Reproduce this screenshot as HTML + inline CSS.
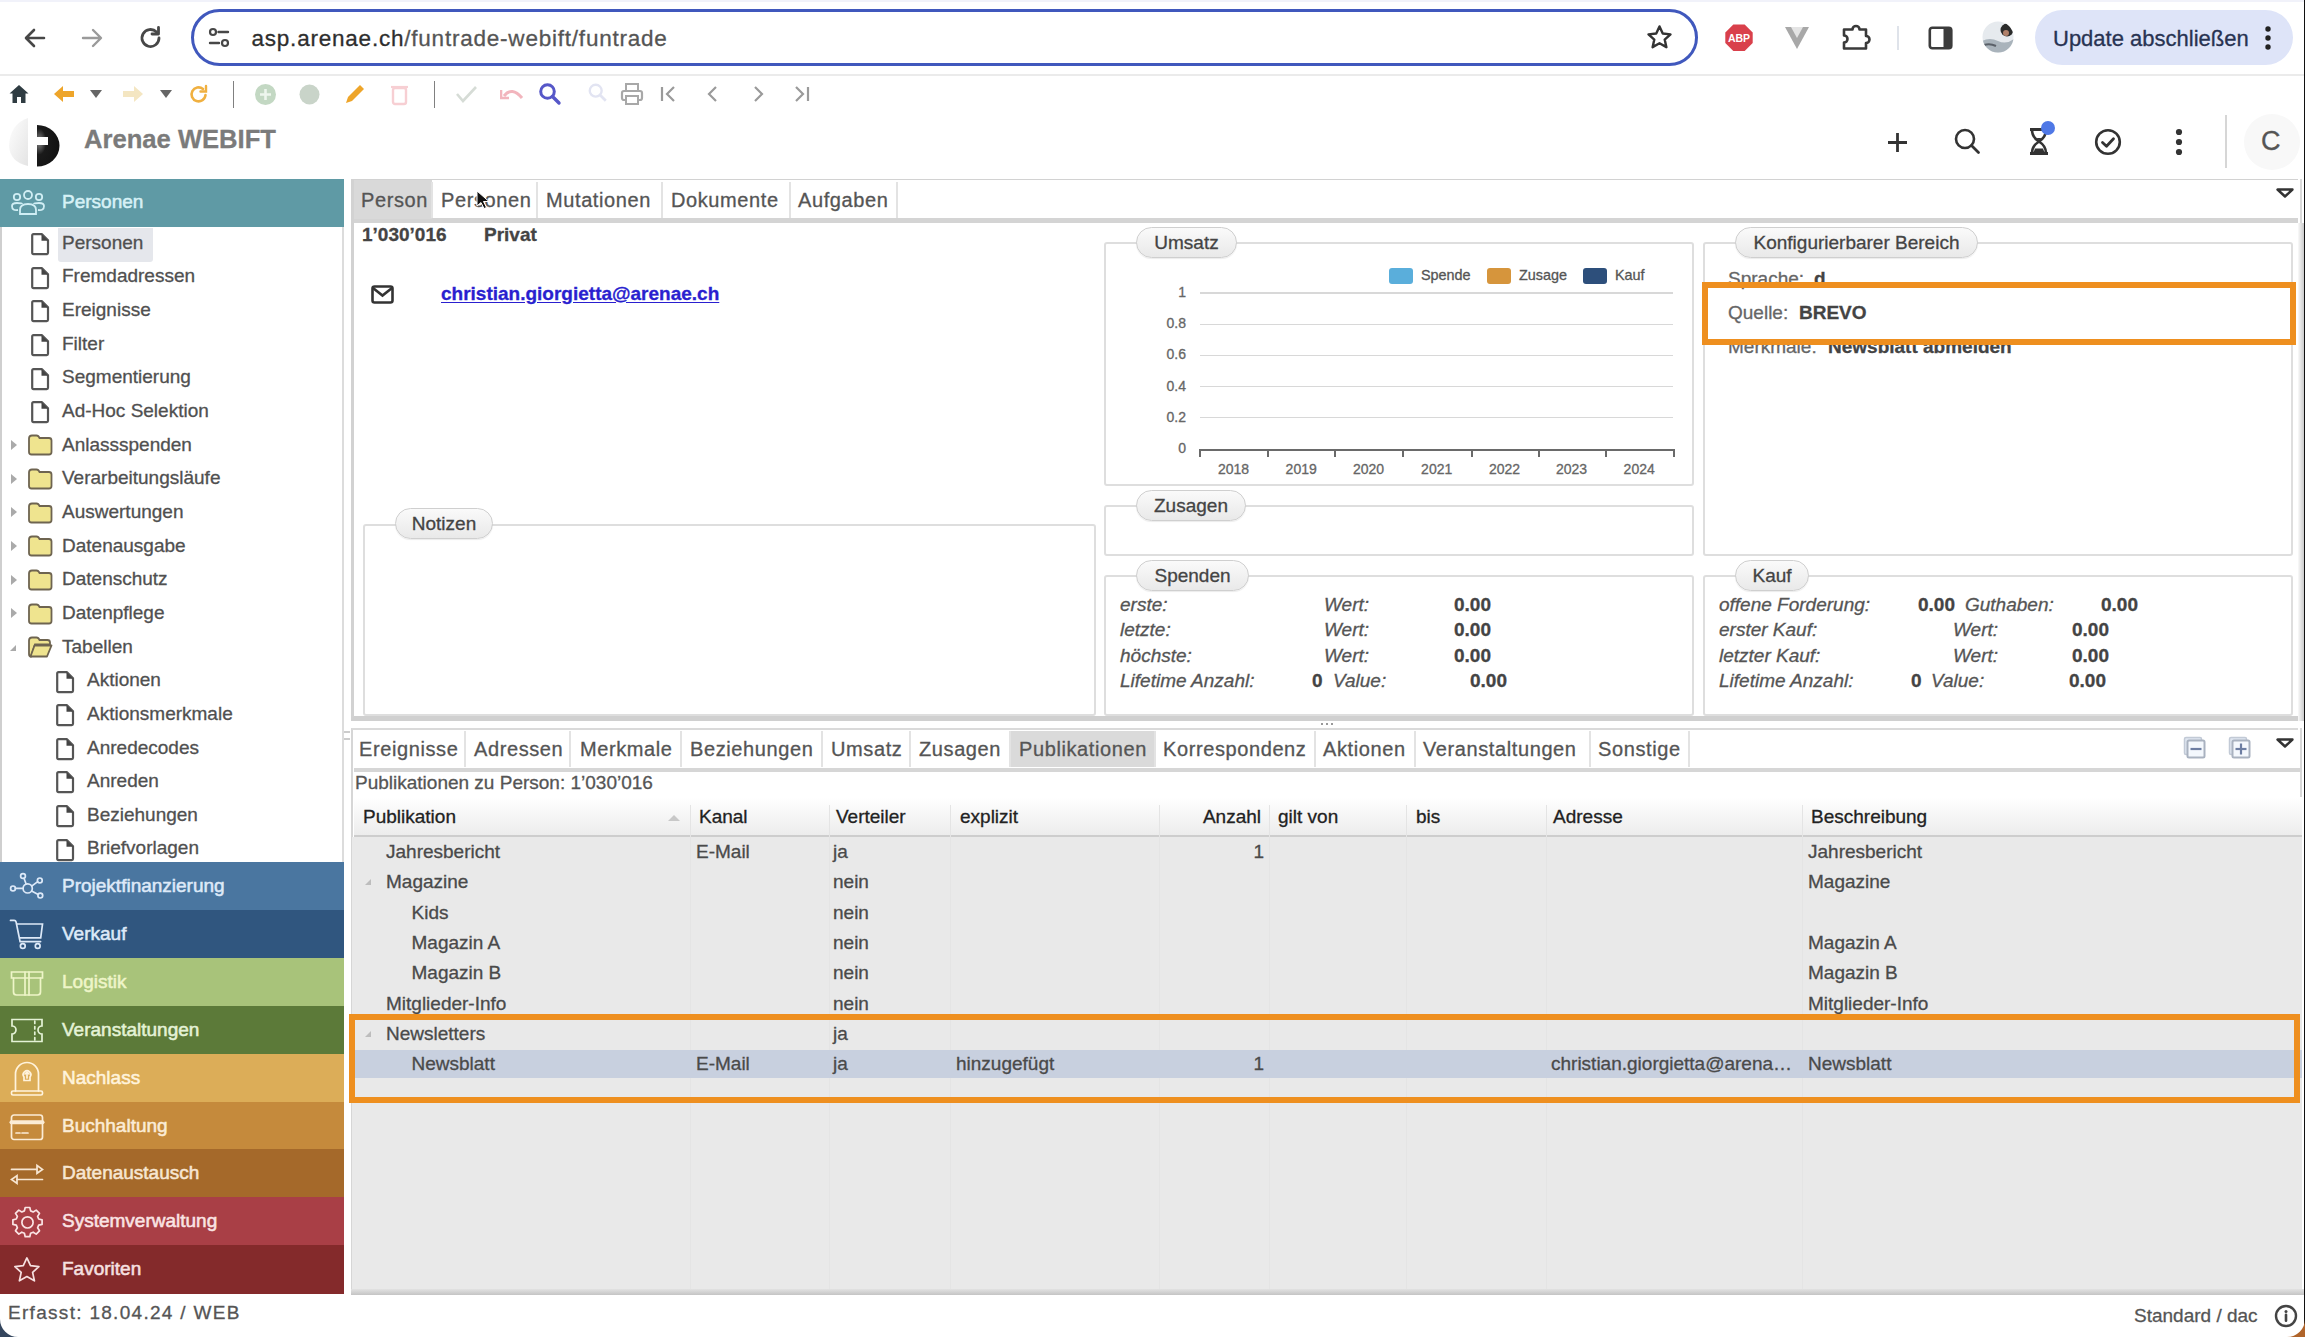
<!DOCTYPE html><html><head><meta charset="utf-8"><style>
*{margin:0;padding:0;box-sizing:border-box}
html,body{width:2305px;height:1337px;overflow:hidden;background:#fff;font-family:"Liberation Sans",sans-serif;color:#444;-webkit-text-stroke:0.3px}
.a{position:absolute;white-space:nowrap}
.tree{position:absolute;white-space:nowrap;font-size:19px;color:#505050;line-height:26px}
.mod{position:absolute;left:0;width:344px;height:48px}
.mod span{position:absolute;left:62px;top:13px;font-size:19px;-webkit-text-stroke:0.55px;color:#eef3fb;white-space:nowrap}
.mod svg{position:absolute;left:8px;top:7px}
.tab{position:absolute;font-size:20px;color:#555;white-space:nowrap;letter-spacing:0.6px}
.leg{position:absolute;height:32px;border:1px solid #cfcfcf;border-radius:16px;background:linear-gradient(#fafafa,#e9e9e9);font-size:19px;color:#444;text-align:center;line-height:30px;box-shadow:0 1px 1px rgba(0,0,0,.08)}
.fs{position:absolute;border:2px solid #dedede;border-radius:3px}
.it{position:absolute;font-style:italic;font-size:18px;color:#555;white-space:nowrap}
.bd{position:absolute;font-weight:bold;font-size:18px;color:#444;white-space:nowrap}
.th{position:absolute;font-size:19px;color:#222;white-space:nowrap}
.td{position:absolute;font-size:19px;color:#4a4a4a;white-space:nowrap}
</style></head><body>
<div class="a" style="left:0;top:0;width:2305px;height:2px;background:#f1f2fa"></div>
<div class="a" style="left:0;top:74px;width:2305px;height:2px;background:#ebebeb"></div>
<div class="a" style="left:191px;top:9px;width:1507px;height:57px;border:3px solid #4058bd;border-radius:29px"></div>
<div class="a" style="left:251.5px;top:26px;font-size:22.5px;letter-spacing:0.78px;color:#2e2e2e">asp.arenae.ch<span style="color:#555">/funtrade-webift/funtrade</span></div>
<div class="a" style="left:2035px;top:10px;width:258px;height:55px;border-radius:28px;background:#dee4f8"></div>
<div class="a" style="left:2053px;top:26px;font-size:22px;color:#283352">Update abschließen</div>
<div class="a" style="left:84px;top:125px;font-size:25.6px;font-weight:bold;color:#7b7b7b">Arenae WEBIFT</div>
<div class="a" style="left:342px;top:227px;width:1.5px;height:635px;background:#dcdcdc"></div>
<div class="a" style="left:0;top:227px;width:1.5px;height:635px;background:#cfcfcf"></div>
<div class="a" style="left:0;top:179px;width:344px;height:48px;background:#5f9aa5"></div>
<div class="a" style="left:62px;top:191px;font-size:19px;-webkit-text-stroke:0.55px;color:#d6f1f6">Personen</div>
<svg class="a" style="left:10px;top:189px" width="36" height="28" viewBox="0 0 36 28" fill="none" stroke="#d0eef4" stroke-width="1.8"><circle cx="18" cy="6" r="4"/><circle cx="7" cy="8" r="3.2"/><circle cx="29" cy="8" r="3.2"/><path d="M10 25v-4q0-6 8-6t8 6v4z"/><path d="M8 21q-6 1-6-4 0-3 5-3t5 1"/><path d="M28 21q6 1 6-4 0-3-5-3t-5 1"/></svg>
<div class="a" style="left:58px;top:227.5px;width:95px;height:34px;background:#e5e7ec;border-radius:0 0 3px 3px"></div>
<div class="tree" style="left:62px;top:229.7px">Personen</div>
<svg class="a" style="left:30px;top:232.0px" width="20" height="24" viewBox="0 0 20 24"><path d="M2.2 3.5q0-1.3 1.3-1.3h8.5l6 6v12.6q0 1.3-1.3 1.3H3.5q-1.3 0-1.3-1.3z" fill="none" stroke="#555" stroke-width="2.2" stroke-linejoin="round"/><path d="M11.5 2.2l6.5 6.5h-6.5z" fill="#444"/></svg>
<div class="tree" style="left:62px;top:263.3px">Fremdadressen</div>
<svg class="a" style="left:30px;top:265.6px" width="20" height="24" viewBox="0 0 20 24"><path d="M2.2 3.5q0-1.3 1.3-1.3h8.5l6 6v12.6q0 1.3-1.3 1.3H3.5q-1.3 0-1.3-1.3z" fill="none" stroke="#555" stroke-width="2.2" stroke-linejoin="round"/><path d="M11.5 2.2l6.5 6.5h-6.5z" fill="#444"/></svg>
<div class="tree" style="left:62px;top:297.0px">Ereignisse</div>
<svg class="a" style="left:30px;top:299.3px" width="20" height="24" viewBox="0 0 20 24"><path d="M2.2 3.5q0-1.3 1.3-1.3h8.5l6 6v12.6q0 1.3-1.3 1.3H3.5q-1.3 0-1.3-1.3z" fill="none" stroke="#555" stroke-width="2.2" stroke-linejoin="round"/><path d="M11.5 2.2l6.5 6.5h-6.5z" fill="#444"/></svg>
<div class="tree" style="left:62px;top:330.6px">Filter</div>
<svg class="a" style="left:30px;top:332.9px" width="20" height="24" viewBox="0 0 20 24"><path d="M2.2 3.5q0-1.3 1.3-1.3h8.5l6 6v12.6q0 1.3-1.3 1.3H3.5q-1.3 0-1.3-1.3z" fill="none" stroke="#555" stroke-width="2.2" stroke-linejoin="round"/><path d="M11.5 2.2l6.5 6.5h-6.5z" fill="#444"/></svg>
<div class="tree" style="left:62px;top:364.3px">Segmentierung</div>
<svg class="a" style="left:30px;top:366.6px" width="20" height="24" viewBox="0 0 20 24"><path d="M2.2 3.5q0-1.3 1.3-1.3h8.5l6 6v12.6q0 1.3-1.3 1.3H3.5q-1.3 0-1.3-1.3z" fill="none" stroke="#555" stroke-width="2.2" stroke-linejoin="round"/><path d="M11.5 2.2l6.5 6.5h-6.5z" fill="#444"/></svg>
<div class="tree" style="left:62px;top:397.9px">Ad-Hoc Selektion</div>
<svg class="a" style="left:30px;top:400.2px" width="20" height="24" viewBox="0 0 20 24"><path d="M2.2 3.5q0-1.3 1.3-1.3h8.5l6 6v12.6q0 1.3-1.3 1.3H3.5q-1.3 0-1.3-1.3z" fill="none" stroke="#555" stroke-width="2.2" stroke-linejoin="round"/><path d="M11.5 2.2l6.5 6.5h-6.5z" fill="#444"/></svg>
<div class="tree" style="left:62px;top:431.6px">Anlassspenden</div>
<svg class="a" style="left:27px;top:434.4px" width="26" height="22" viewBox="0 0 26 22"><path d="M2 4.5q0-3 3-3h4.5q2 0 3 2.5h9.5q2.5 0 2.5 2.5v11.5q0 2.5-2.5 2.5H4.5Q2 20.5 2 18z" fill="#efe48f" stroke="#6e6450" stroke-width="1.8"/></svg>
<div class="a" style="left:11px;top:439.9px;width:0;height:0;border-left:6.5px solid #aaa;border-top:5.5px solid transparent;border-bottom:5.5px solid transparent"></div>
<div class="tree" style="left:62px;top:465.2px">Verarbeitungsläufe</div>
<svg class="a" style="left:27px;top:468.0px" width="26" height="22" viewBox="0 0 26 22"><path d="M2 4.5q0-3 3-3h4.5q2 0 3 2.5h9.5q2.5 0 2.5 2.5v11.5q0 2.5-2.5 2.5H4.5Q2 20.5 2 18z" fill="#efe48f" stroke="#6e6450" stroke-width="1.8"/></svg>
<div class="a" style="left:11px;top:473.5px;width:0;height:0;border-left:6.5px solid #aaa;border-top:5.5px solid transparent;border-bottom:5.5px solid transparent"></div>
<div class="tree" style="left:62px;top:498.9px">Auswertungen</div>
<svg class="a" style="left:27px;top:501.7px" width="26" height="22" viewBox="0 0 26 22"><path d="M2 4.5q0-3 3-3h4.5q2 0 3 2.5h9.5q2.5 0 2.5 2.5v11.5q0 2.5-2.5 2.5H4.5Q2 20.5 2 18z" fill="#efe48f" stroke="#6e6450" stroke-width="1.8"/></svg>
<div class="a" style="left:11px;top:507.2px;width:0;height:0;border-left:6.5px solid #aaa;border-top:5.5px solid transparent;border-bottom:5.5px solid transparent"></div>
<div class="tree" style="left:62px;top:532.5px">Datenausgabe</div>
<svg class="a" style="left:27px;top:535.3px" width="26" height="22" viewBox="0 0 26 22"><path d="M2 4.5q0-3 3-3h4.5q2 0 3 2.5h9.5q2.5 0 2.5 2.5v11.5q0 2.5-2.5 2.5H4.5Q2 20.5 2 18z" fill="#efe48f" stroke="#6e6450" stroke-width="1.8"/></svg>
<div class="a" style="left:11px;top:540.8px;width:0;height:0;border-left:6.5px solid #aaa;border-top:5.5px solid transparent;border-bottom:5.5px solid transparent"></div>
<div class="tree" style="left:62px;top:566.2px">Datenschutz</div>
<svg class="a" style="left:27px;top:569.0px" width="26" height="22" viewBox="0 0 26 22"><path d="M2 4.5q0-3 3-3h4.5q2 0 3 2.5h9.5q2.5 0 2.5 2.5v11.5q0 2.5-2.5 2.5H4.5Q2 20.5 2 18z" fill="#efe48f" stroke="#6e6450" stroke-width="1.8"/></svg>
<div class="a" style="left:11px;top:574.5px;width:0;height:0;border-left:6.5px solid #aaa;border-top:5.5px solid transparent;border-bottom:5.5px solid transparent"></div>
<div class="tree" style="left:62px;top:599.9px">Datenpflege</div>
<svg class="a" style="left:27px;top:602.6px" width="26" height="22" viewBox="0 0 26 22"><path d="M2 4.5q0-3 3-3h4.5q2 0 3 2.5h9.5q2.5 0 2.5 2.5v11.5q0 2.5-2.5 2.5H4.5Q2 20.5 2 18z" fill="#efe48f" stroke="#6e6450" stroke-width="1.8"/></svg>
<div class="a" style="left:11px;top:608.1px;width:0;height:0;border-left:6.5px solid #aaa;border-top:5.5px solid transparent;border-bottom:5.5px solid transparent"></div>
<div class="tree" style="left:62px;top:633.5px">Tabellen</div>
<svg class="a" style="left:27px;top:636.3px" width="26" height="22" viewBox="0 0 26 22"><path d="M2 4.5q0-3 3-3h4.5q2 0 3 2.5h8q2.5 0 2.5 2.5v2H8l-4 12q-2 0-2-2.5z" fill="#efe48f" stroke="#6e6450" stroke-width="1.8"/><path d="M7.5 9.5h17l-4.5 11H3.5z" fill="#efe48f" stroke="#6e6450" stroke-width="1.8" stroke-linejoin="round"/></svg>
<div class="a" style="left:10px;top:644.8px;width:0;height:0;border-right:6px solid #aaa;border-top:6px solid transparent"></div>
<div class="tree" style="left:87px;top:667.2px">Aktionen</div>
<svg class="a" style="left:55px;top:669.5px" width="20" height="24" viewBox="0 0 20 24"><path d="M2.2 3.5q0-1.3 1.3-1.3h8.5l6 6v12.6q0 1.3-1.3 1.3H3.5q-1.3 0-1.3-1.3z" fill="none" stroke="#555" stroke-width="2.2" stroke-linejoin="round"/><path d="M11.5 2.2l6.5 6.5h-6.5z" fill="#444"/></svg>
<div class="tree" style="left:87px;top:700.8px">Aktionsmerkmale</div>
<svg class="a" style="left:55px;top:703.1px" width="20" height="24" viewBox="0 0 20 24"><path d="M2.2 3.5q0-1.3 1.3-1.3h8.5l6 6v12.6q0 1.3-1.3 1.3H3.5q-1.3 0-1.3-1.3z" fill="none" stroke="#555" stroke-width="2.2" stroke-linejoin="round"/><path d="M11.5 2.2l6.5 6.5h-6.5z" fill="#444"/></svg>
<div class="tree" style="left:87px;top:734.5px">Anredecodes</div>
<svg class="a" style="left:55px;top:736.8px" width="20" height="24" viewBox="0 0 20 24"><path d="M2.2 3.5q0-1.3 1.3-1.3h8.5l6 6v12.6q0 1.3-1.3 1.3H3.5q-1.3 0-1.3-1.3z" fill="none" stroke="#555" stroke-width="2.2" stroke-linejoin="round"/><path d="M11.5 2.2l6.5 6.5h-6.5z" fill="#444"/></svg>
<div class="tree" style="left:87px;top:768.1px">Anreden</div>
<svg class="a" style="left:55px;top:770.4px" width="20" height="24" viewBox="0 0 20 24"><path d="M2.2 3.5q0-1.3 1.3-1.3h8.5l6 6v12.6q0 1.3-1.3 1.3H3.5q-1.3 0-1.3-1.3z" fill="none" stroke="#555" stroke-width="2.2" stroke-linejoin="round"/><path d="M11.5 2.2l6.5 6.5h-6.5z" fill="#444"/></svg>
<div class="tree" style="left:87px;top:801.8px">Beziehungen</div>
<svg class="a" style="left:55px;top:804.0px" width="20" height="24" viewBox="0 0 20 24"><path d="M2.2 3.5q0-1.3 1.3-1.3h8.5l6 6v12.6q0 1.3-1.3 1.3H3.5q-1.3 0-1.3-1.3z" fill="none" stroke="#555" stroke-width="2.2" stroke-linejoin="round"/><path d="M11.5 2.2l6.5 6.5h-6.5z" fill="#444"/></svg>
<div class="tree" style="left:87px;top:835.4px">Briefvorlagen</div>
<svg class="a" style="left:55px;top:837.7px" width="20" height="24" viewBox="0 0 20 24"><path d="M2.2 3.5q0-1.3 1.3-1.3h8.5l6 6v12.6q0 1.3-1.3 1.3H3.5q-1.3 0-1.3-1.3z" fill="none" stroke="#555" stroke-width="2.2" stroke-linejoin="round"/><path d="M11.5 2.2l6.5 6.5h-6.5z" fill="#444"/></svg>
<div class="mod" style="top:861.8px;height:48.5px;background:#4a76a0"><span style="color:#dde9f8">Projektfinanzierung</span><svg width="38" height="38" viewBox="0 0 36 36" style="left:9px;top:6px;width:36px;height:36px" fill="none" stroke="#dde9f8" stroke-width="1.7" stroke-linecap="round"><circle cx="18.7" cy="20.4" r="4.6"/><circle cx="14" cy="8" r="2.4"/><circle cx="30.8" cy="12.4" r="2.4"/><circle cx="4" cy="20.4" r="2.4"/><circle cx="31.3" cy="27.6" r="2.4"/><path d="M15 10.2l2 5.6M28.7 13.6l-6 4.6M6.4 20.4h7.7M29.2 26.4l-6.6-3.4"/></svg></div>
<div class="mod" style="top:909.7px;height:48.5px;background:#30567f"><span style="color:#dde9f8">Verkauf</span><svg width="38" height="38" viewBox="0 0 36 36" style="left:9px;top:6px;width:36px;height:36px" fill="none" stroke="#dde9f8" stroke-width="1.7" stroke-linecap="round"><path d="M1.5 4.4h3.6q1.6 0 2 1.6l4 19.6h20.5"/><path d="M8.2 8h25.3l-1.8 13.8H11"/><circle cx="13.8" cy="30" r="2.4"/><circle cx="28.7" cy="30" r="2.4"/></svg></div>
<div class="mod" style="top:957.7px;height:48.5px;background:#a8c37a"><span style="color:#eef5c8">Logistik</span><svg width="38" height="38" viewBox="0 0 36 36" style="left:9px;top:6px;width:36px;height:36px" fill="none" stroke="#eef5c8" stroke-width="1.7" stroke-linecap="round"><path d="M2.5 8h31v6h-31z"/><path d="M4.5 14v14q0 3 3 3h21q3 0 3-3V14"/><path d="M16 8v23M20 8v23"/></svg></div>
<div class="mod" style="top:1005.6px;height:48.5px;background:#5c7a39"><span style="color:#e4f2d6">Veranstaltungen</span><svg width="38" height="38" viewBox="0 0 36 36" style="left:9px;top:6px;width:36px;height:36px" fill="none" stroke="#e4f2d6" stroke-width="1.7" stroke-linecap="round"><path d="M3 7.5h30v6.5a4 4 0 0 0 0 8v7.5H3V22a4 4 0 0 0 0-8z"/><path d="M25.8 9v2.5M25.8 14.5v2.5M25.8 20v2.5M25.8 25.5v2.5"/></svg></div>
<div class="mod" style="top:1053.6px;height:48.5px;background:#dcad58"><span style="color:#fff3dc">Nachlass</span><svg width="38" height="38" viewBox="0 0 36 36" style="left:9px;top:6px;width:36px;height:36px" fill="none" stroke="#fff3dc" stroke-width="1.7" stroke-linecap="round"><path d="M6.5 31V14a11.5 11.5 0 0 1 23 0v17"/><rect x="2.5" y="31" width="31" height="4" rx="1.5"/><path d="M15 20.5v-3.5a3.8 3.8 0 1 1 6 0v3.5z"/><path d="M18 18v-6M16 14l2-2 2 2"/></svg></div>
<div class="mod" style="top:1101.5px;height:48.5px;background:#c58a3c"><span style="color:#fbecd6">Buchhaltung</span><svg width="38" height="38" viewBox="0 0 36 36" style="left:9px;top:6px;width:36px;height:36px" fill="none" stroke="#fbecd6" stroke-width="1.7" stroke-linecap="round"><rect x="2.5" y="7" width="31" height="24.5" rx="2.5"/><path d="M2.5 14.2h31" stroke-width="4"/><path d="M7 25h4M13 25h6"/></svg></div>
<div class="mod" style="top:1149.4px;height:48.5px;background:#a5692a"><span style="color:#f7e6d2">Datenaustausch</span><svg width="38" height="38" viewBox="0 0 36 36" style="left:9px;top:6px;width:36px;height:36px" fill="none" stroke="#f7e6d2" stroke-width="1.7" stroke-linecap="round"><path d="M2.5 14.4h25.5"/><path d="M28 10.5l5.5 3.9-5.5 3.9z"/><path d="M33.5 24.5H8"/><path d="M8 20.6l-5.5 3.9 5.5 3.9z"/></svg></div>
<div class="mod" style="top:1197.4px;height:48.5px;background:#a93f46"><span style="color:#fae4e4">Systemverwaltung</span><svg width="38" height="38" viewBox="0 0 36 36" style="left:9px;top:6px;width:36px;height:36px" fill="none" stroke="#fae4e4" stroke-width="1.7" stroke-linecap="round"><path d="M16.2 4.5h4.6l.8 3.4 2.6 1.1 3-1.9 3.3 3.3-1.9 3 1.1 2.6 3.4.8v4.6l-3.4.8-1.1 2.6 1.9 3-3.3 3.3-3-1.9-2.6 1.1-.8 3.4h-4.6l-.8-3.4-2.6-1.1-3 1.9-3.3-3.3 1.9-3-1.1-2.6-3.4-.8v-4.6l3.4-.8 1.1-2.6-1.9-3 3.3-3.3 3 1.9 2.6-1.1z" stroke-linejoin="round"/><circle cx="18.5" cy="19.4" r="5.6"/></svg></div>
<div class="mod" style="top:1245.3px;height:48.5px;background:#842a2b"><span style="color:#f6e0e0">Favoriten</span><svg width="38" height="38" viewBox="0 0 36 36" style="left:9px;top:6px;width:36px;height:36px" fill="none" stroke="#f6e0e0" stroke-width="1.7" stroke-linecap="round"><path d="M17.9 6.9l3.6 7.8 8.4.9-6.3 5.8 1.8 8.4-7.5-4.3-7.5 4.3 1.8-8.4-6.3-5.8 8.4-.9z" stroke-linejoin="round"/></svg></div>
<div class="a" style="left:8px;top:1302px;font-size:19px;letter-spacing:1.3px;color:#555">Erfasst: 18.04.24 / WEB</div>
<svg class="a" style="left:22px;top:25px" width="26" height="26" viewBox="0 0 26 26"><path d="M22 13H5M12 5l-8 8 8 8" fill="none" stroke="#474747" stroke-width="2.6" stroke-linecap="round" stroke-linejoin="round"/></svg>
<svg class="a" style="left:79px;top:25px" width="26" height="26" viewBox="0 0 26 26"><path d="M4 13h17M14 5l8 8-8 8" fill="none" stroke="#9a9a9a" stroke-width="2.4" stroke-linecap="round" stroke-linejoin="round"/></svg>
<svg class="a" style="left:137px;top:24px" width="28" height="28" viewBox="0 0 28 28"><path d="M22 14a8.5 8.5 0 1 1-2.5-6" fill="none" stroke="#474747" stroke-width="2.8" stroke-linecap="round"/><path d="M21.5 3.5v6.5H15" fill="none" stroke="#474747" stroke-width="2.8" stroke-linecap="round" stroke-linejoin="round"/></svg>
<svg class="a" style="left:207px;top:26px" width="24" height="24" viewBox="0 0 24 24"><circle cx="6" cy="6" r="3" fill="none" stroke="#474747" stroke-width="2.2"/><path d="M11.5 6H21M3 17h9" stroke="#474747" stroke-width="2.4" stroke-linecap="round"/><circle cx="18" cy="17" r="3" fill="none" stroke="#474747" stroke-width="2.2"/></svg>
<svg class="a" style="left:1645px;top:23px" width="29" height="29" viewBox="0 0 24 24"><path d="M12 2.8l2.7 5.9 6.4.7-4.8 4.3 1.4 6.3L12 16.8 6.3 20l1.4-6.3-4.8-4.3 6.4-.7z" fill="none" stroke="#333" stroke-width="2" stroke-linejoin="round"/></svg>
<svg class="a" style="left:1724px;top:23px" width="30" height="29" viewBox="0 0 30 29"><path d="M9.3 1.5h11.4l8 8v10.5l-8 8H9.3l-8-8V9.5z" fill="#d9404b"/><text x="15" y="19" font-family="Liberation Sans" font-weight="bold" font-size="10.5" fill="#fff" text-anchor="middle">ABP</text></svg>
<svg class="a" style="left:1784px;top:26px" width="26" height="24" viewBox="0 0 26 24"><path d="M1 1h24L13 23z" fill="#a8a8a8"/><path d="M7 1h12l-6 11z" fill="#e4e4e4"/></svg>
<svg class="a" style="left:1840px;top:22px" width="32" height="29" viewBox="0 0 32 29"><path d="M4 7.5h8.5a3.5 3.5 0 0 1 7 0H26v6.5a3.5 3.5 0 0 1 0 7v5.5H4v-6a3 3 0 0 0 0-7z" fill="none" stroke="#3a3a3a" stroke-width="2.6" stroke-linejoin="round"/></svg>
<div class="a" style="left:1897px;top:26px;width:1.5px;height:24px;background:#dfe3ea"></div>
<svg class="a" style="left:1928px;top:26px" width="26" height="24" viewBox="0 0 26 24"><rect x="1.8" y="1.8" width="21.5" height="20.5" rx="2.5" fill="none" stroke="#3c3c3c" stroke-width="2.6"/><rect x="15.5" y="1.8" width="7.8" height="20.5" fill="#3c3c3c"/></svg>
<svg class="a" style="left:1982px;top:21px" width="32" height="32" viewBox="0 0 32 32"><defs><clipPath id="av"><circle cx="16" cy="16" r="15.5"/></clipPath></defs><g clip-path="url(#av)"><rect width="32" height="32" fill="#e6eaee"/><path d="M0 20q8-4 16 0t16-2v14H0z" fill="#a9b3bb"/><path d="M2 24q6-2 12 1" stroke="#5a6068" stroke-width="2" fill="none"/><circle cx="25" cy="9" r="6.5" fill="#2b2b2b"/><circle cx="24" cy="12" r="3" fill="#b0806a"/></g></svg>
<svg class="a" style="left:2262px;top:25px" width="12" height="28" viewBox="0 0 12 28"><circle cx="6" cy="4" r="2.7" fill="#222"/><circle cx="6" cy="13" r="2.7" fill="#222"/><circle cx="6" cy="22" r="2.7" fill="#222"/></svg>
<svg class="a" style="left:8px;top:83px" width="22" height="22" viewBox="0 0 22 22"><path d="M11 2L1.5 10.5H4.5V20H9V14H13V20H17.5V10.5H20.5z" fill="#2f3c42"/></svg>
<svg class="a" style="left:53px;top:84px" width="22" height="20" viewBox="0 0 22 20"><path d="M1 10l9-8v5h11v6H10v5z" fill="#eea52a"/></svg>
<div class="a" style="left:90px;top:90px;width:0;height:0;border-top:8px solid #666;border-left:6px solid transparent;border-right:6px solid transparent"></div>
<svg class="a" style="left:122px;top:84px" width="22" height="20" viewBox="0 0 22 20"><path d="M21 10l-9-8v5H1v6h11v5z" fill="#f4e6c2"/></svg>
<div class="a" style="left:160px;top:90px;width:0;height:0;border-top:8px solid #666;border-left:6px solid transparent;border-right:6px solid transparent"></div>
<svg class="a" style="left:187px;top:83px" width="23" height="23" viewBox="0 0 23 23"><path d="M18.5 12a7 7 0 1 1-2.5-6" fill="none" stroke="#f0b040" stroke-width="2.6" stroke-linecap="round"/><path d="M19 3v5.5h-5.5" fill="none" stroke="#f0b040" stroke-width="2.4" stroke-linecap="round"/></svg>
<div class="a" style="left:232.5px;top:81px;width:1.5px;height:27px;background:#808080"></div>
<svg class="a" style="left:254px;top:83px" width="23" height="23" viewBox="0 0 23 23"><circle cx="11.5" cy="11.5" r="10.5" fill="#c3d8c3"/><path d="M11.5 6v11M6 11.5h11" stroke="#eef6ee" stroke-width="2.6"/></svg>
<svg class="a" style="left:298px;top:83px" width="23" height="23" viewBox="0 0 23 23"><circle cx="11.5" cy="11.5" r="10" fill="#c9d4c9"/></svg>
<svg class="a" style="left:343px;top:82px" width="23" height="24" viewBox="0 0 23 24"><path d="M3 21l2-6L17 3l4 4L9 19z" fill="#eea52a"/></svg>
<svg class="a" style="left:390px;top:83px" width="19" height="23" viewBox="0 0 19 23"><rect x="3" y="5" width="13" height="16" rx="2" fill="none" stroke="#f7cfd3" stroke-width="2.4"/><path d="M1 4h17" stroke="#f7cfd3" stroke-width="2.2"/></svg>
<div class="a" style="left:433.5px;top:81px;width:1.5px;height:27px;background:#808080"></div>
<svg class="a" style="left:455px;top:84px" width="23" height="20" viewBox="0 0 23 20"><path d="M2 10l6 7L21 3" fill="none" stroke="#d6dcd6" stroke-width="2.6"/></svg>
<svg class="a" style="left:500px;top:84px" width="24" height="20" viewBox="0 0 24 20"><path d="M4 12q8-10 18 2" fill="none" stroke="#f2b5bd" stroke-width="3"/><path d="M1 6v8h8" fill="none" stroke="#f2b5bd" stroke-width="2.6"/></svg>
<svg class="a" style="left:538px;top:82px" width="24" height="24" viewBox="0 0 24 24"><circle cx="9.5" cy="9.5" r="6.8" fill="none" stroke="#5657c8" stroke-width="3"/><path d="M14.5 14.5l6.5 6.5" stroke="#5657c8" stroke-width="3.4" stroke-linecap="round"/></svg>
<svg class="a" style="left:587px;top:82px" width="22" height="22" viewBox="0 0 24 24"><circle cx="9.5" cy="9.5" r="6.5" fill="none" stroke="#e2e4f2" stroke-width="2.6"/><path d="M14.5 14.5l6 6" stroke="#e2e4f2" stroke-width="3"/></svg>
<svg class="a" style="left:620px;top:82px" width="24" height="24" viewBox="0 0 24 24"><rect x="6" y="2" width="12" height="7" fill="none" stroke="#a8a8a8" stroke-width="2"/><rect x="2" y="9" width="20" height="9" rx="2" fill="none" stroke="#a8a8a8" stroke-width="2.2"/><rect x="6" y="14" width="12" height="8" fill="#fff" stroke="#a8a8a8" stroke-width="2"/></svg>
<svg class="a" style="left:659px;top:85px" width="20" height="18" viewBox="0 0 20 18"><path d="M3 2v14M15 2l-7 7 7 7" fill="none" stroke="#9a9a9a" stroke-width="2.2"/></svg>
<svg class="a" style="left:705px;top:85px" width="16" height="18" viewBox="0 0 16 18"><path d="M11 2l-7 7 7 7" fill="none" stroke="#9a9a9a" stroke-width="2.2"/></svg>
<svg class="a" style="left:750px;top:85px" width="16" height="18" viewBox="0 0 16 18"><path d="M5 2l7 7-7 7" fill="none" stroke="#9a9a9a" stroke-width="2.2"/></svg>
<svg class="a" style="left:791px;top:85px" width="20" height="18" viewBox="0 0 20 18"><path d="M17 2v14M5 2l7 7-7 7" fill="none" stroke="#9a9a9a" stroke-width="2.2"/></svg>
<svg class="a" style="left:0;top:110px" width="70" height="65" viewBox="0 0 70 65"><defs><linearGradient id="lg" x1="0" y1="0" x2="1" y2="1"><stop offset="0" stop-color="#fefefe"/><stop offset="1" stop-color="#e4e4e4"/></linearGradient><radialGradient id="dg" cx="0.1" cy="0.4" r="0.9"><stop offset="0" stop-color="#888"/><stop offset="0.35" stop-color="#1a1a1a"/><stop offset="1" stop-color="#111"/></radialGradient></defs><path d="M28 8Q10 14 9 36q1 16 19 20z" fill="url(#lg)"/><path d="M37 15a22.5 20.8 0 0 1 0 41.6z" fill="url(#dg)"/><rect x="37" y="27" width="11" height="8" fill="#fff"/></svg>
<svg class="a" style="left:1886px;top:131px" width="23" height="23" viewBox="0 0 23 23"><path d="M11.5 2v19M2 11.5h19" stroke="#333" stroke-width="2.8"/></svg>
<svg class="a" style="left:1953px;top:127px" width="28" height="28" viewBox="0 0 28 28"><circle cx="12" cy="12" r="9" fill="none" stroke="#333" stroke-width="2.6"/><path d="M18.5 18.5l7 7" stroke="#333" stroke-width="2.8" stroke-linecap="round"/></svg>
<svg class="a" style="left:2027px;top:127px" width="24" height="29" viewBox="0 0 24 29"><path d="M3 2.5h18M3 26.5h18" stroke="#333" stroke-width="3"/><path d="M5 3q0 7 7 11.5Q5 19 5 26h14q0-7-7-11.5Q19 10 19 3" fill="none" stroke="#333" stroke-width="2.6"/><path d="M8 21.5h8l1.5 4h-11z" fill="#333"/><path d="M9.5 11h5l-2.5 2.5z" fill="#333"/></svg>
<div class="a" style="left:2041px;top:121px;width:14px;height:14px;border-radius:7px;background:#4f78e6"></div>
<svg class="a" style="left:2094px;top:128px" width="28" height="28" viewBox="0 0 28 28"><circle cx="14" cy="14" r="11.8" fill="none" stroke="#333" stroke-width="2.6"/><path d="M8.5 14.5l4 3.8 7-7.5" fill="none" stroke="#333" stroke-width="2.8" stroke-linecap="round" stroke-linejoin="round"/></svg>
<svg class="a" style="left:2173px;top:127px" width="12" height="30" viewBox="0 0 12 30"><circle cx="6" cy="5" r="3.1" fill="#333"/><circle cx="6" cy="15" r="3.1" fill="#333"/><circle cx="6" cy="25" r="3.1" fill="#333"/></svg>
<div class="a" style="left:2225px;top:115px;width:2px;height:53px;background:#d6d6d6"></div>
<div class="a" style="left:2244px;top:114px;width:56px;height:56px;border-radius:28px;background:#f8f8f8"></div>
<div class="a" style="left:2261px;top:126px;font-size:27px;color:#555">C</div>
<div class="a" style="left:2298px;top:179px;width:3.7px;height:44px;background:#fff;border-right:2px solid #dadada"></div>
<div class="a" style="left:2298px;top:223px;width:6px;height:498px;background:linear-gradient(90deg,#fafafa,#cacaca)"></div>
<div class="a" style="left:2298px;top:728px;width:3.7px;height:567px;background:#fff;border-right:2px solid #d8d8d8"></div>
<div class="a" style="left:2303.7px;top:0;width:1.3px;height:1337px;background:#111"></div>
<div class="a" style="left:351px;top:178.5px;width:1947px;height:542px;border:3px solid #d2d2d2;border-top:1px solid #d2d2d2;border-right:none;border-bottom:5px solid #d0d0d0;background:#fff"></div>
<div class="a" style="left:354px;top:179.5px;width:1944px;height:39px;background:#fff"></div>
<div class="a" style="left:354px;top:218px;width:1944px;height:5px;background:#d4d4d4"></div>
<div class="a" style="left:354px;top:179.5px;width:78px;height:39px;background:#d9d9d9"></div>
<div class="a" style="left:431px;top:182px;width:2px;height:36px;background:#e3e3e3"></div>
<div class="a" style="left:536px;top:182px;width:2px;height:36px;background:#e3e3e3"></div>
<div class="a" style="left:661px;top:182px;width:2px;height:36px;background:#e3e3e3"></div>
<div class="a" style="left:789px;top:182px;width:2px;height:36px;background:#e3e3e3"></div>
<div class="a" style="left:896px;top:182px;width:2px;height:36px;background:#e3e3e3"></div>
<div class="tab" style="left:361px;top:189px">Person</div>
<div class="tab" style="left:441px;top:189px">Personen</div>
<div class="tab" style="left:546px;top:189px">Mutationen</div>
<div class="tab" style="left:671px;top:189px">Dokumente</div>
<div class="tab" style="left:798px;top:189px">Aufgaben</div>
<svg class="a" style="left:476px;top:190px" width="14" height="20" viewBox="0 0 14 20"><path d="M1 1v15l4-3.5 3 6 2.5-1-3-6h5.5z" fill="#111" stroke="#fff" stroke-width="1"/></svg>
<div class="bd" style="left:362px;top:224px;font-size:19px">1’030’016</div>
<div class="bd" style="left:484px;top:224px;font-size:19px">Privat</div>
<svg class="a" style="left:371px;top:285px" width="23" height="19" viewBox="0 0 23 19"><rect x="1.5" y="1.5" width="20" height="16" rx="2" fill="none" stroke="#333" stroke-width="2.6"/><path d="M2 3l9.5 7.5L21 3" fill="none" stroke="#333" stroke-width="2.6"/></svg>
<div class="a" style="left:441px;top:283px;font-size:19px;font-weight:bold;color:#2a1fcf;text-decoration:underline;text-underline-offset:2px">christian.giorgietta@arenae.ch</div>
<div class="fs" style="left:363px;top:524px;width:733px;height:192px"></div>
<div class="leg" style="left:395px;top:508px;width:98px;height:31px">Notizen</div>
<div class="fs" style="left:1103.5px;top:242.3px;width:590.5px;height:243.3px"></div>
<div class="leg" style="left:1136px;top:227px;width:101px;height:31px">Umsatz</div>
<div class="fs" style="left:1103.5px;top:504.5px;width:590.5px;height:51.5px"></div>
<div class="leg" style="left:1136px;top:490px;width:110px;height:31px">Zusagen</div>
<div class="fs" style="left:1103.5px;top:575px;width:590.5px;height:141px"></div>
<div class="leg" style="left:1136px;top:560px;width:113px;height:31px">Spenden</div>
<div class="fs" style="left:1702.5px;top:242.3px;width:590.5px;height:313.7px"></div>
<div class="leg" style="left:1735px;top:227px;width:243px;height:31px">Konfigurierbarer Bereich</div>
<div class="fs" style="left:1702.5px;top:575px;width:590.5px;height:141px"></div>
<div class="leg" style="left:1735px;top:560px;width:74px;height:31px">Kauf</div>
<div class="a" style="left:1200px;top:292.2px;width:473px;height:1.5px;background:#d8d8d8"></div>
<div class="a" style="left:1200px;top:323.6px;width:473px;height:1.5px;background:#d8d8d8"></div>
<div class="a" style="left:1200px;top:354.6px;width:473px;height:1.5px;background:#d8d8d8"></div>
<div class="a" style="left:1200px;top:385.8px;width:473px;height:1.5px;background:#d8d8d8"></div>
<div class="a" style="left:1200px;top:416.8px;width:473px;height:1.5px;background:#d8d8d8"></div>
<div class="a" style="left:1136px;top:284.0px;width:50px;text-align:right;font-size:14px;color:#666">1</div>
<div class="a" style="left:1136px;top:315.3px;width:50px;text-align:right;font-size:14px;color:#666">0.8</div>
<div class="a" style="left:1136px;top:346.3px;width:50px;text-align:right;font-size:14px;color:#666">0.6</div>
<div class="a" style="left:1136px;top:377.5px;width:50px;text-align:right;font-size:14px;color:#666">0.4</div>
<div class="a" style="left:1136px;top:408.5px;width:50px;text-align:right;font-size:14px;color:#666">0.2</div>
<div class="a" style="left:1136px;top:440.0px;width:50px;text-align:right;font-size:14px;color:#666">0</div>
<div class="a" style="left:1199px;top:449px;width:476px;height:2px;background:#6a6a6a"></div>
<div class="a" style="left:1199.2px;top:449px;width:2px;height:8px;background:#6a6a6a"></div>
<div class="a" style="left:1267.0px;top:449px;width:2px;height:8px;background:#6a6a6a"></div>
<div class="a" style="left:1334.3px;top:449px;width:2px;height:8px;background:#6a6a6a"></div>
<div class="a" style="left:1401.8px;top:449px;width:2px;height:8px;background:#6a6a6a"></div>
<div class="a" style="left:1470.5px;top:449px;width:2px;height:8px;background:#6a6a6a"></div>
<div class="a" style="left:1537.5px;top:449px;width:2px;height:8px;background:#6a6a6a"></div>
<div class="a" style="left:1604.5px;top:449px;width:2px;height:8px;background:#6a6a6a"></div>
<div class="a" style="left:1673.0px;top:449px;width:2px;height:8px;background:#6a6a6a"></div>
<div class="a" style="left:1203.6px;top:461px;width:60px;text-align:center;font-size:14px;color:#666">2018</div>
<div class="a" style="left:1271.2px;top:461px;width:60px;text-align:center;font-size:14px;color:#666">2019</div>
<div class="a" style="left:1338.5px;top:461px;width:60px;text-align:center;font-size:14px;color:#666">2020</div>
<div class="a" style="left:1406.7px;top:461px;width:60px;text-align:center;font-size:14px;color:#666">2021</div>
<div class="a" style="left:1474.5px;top:461px;width:60px;text-align:center;font-size:14px;color:#666">2022</div>
<div class="a" style="left:1541.5px;top:461px;width:60px;text-align:center;font-size:14px;color:#666">2023</div>
<div class="a" style="left:1609.2px;top:461px;width:60px;text-align:center;font-size:14px;color:#666">2024</div>
<div class="a" style="left:1389px;top:268px;width:24px;height:16px;border-radius:3px;background:#5aaedb"></div>
<div class="a" style="left:1421px;top:267px;font-size:14.4px;color:#555">Spende</div>
<div class="a" style="left:1487px;top:268px;width:24px;height:16px;border-radius:3px;background:#d6953c"></div>
<div class="a" style="left:1519px;top:267px;font-size:14.4px;color:#555">Zusage</div>
<div class="a" style="left:1583px;top:268px;width:24px;height:16px;border-radius:3px;background:#2d4f7b"></div>
<div class="a" style="left:1615px;top:267px;font-size:14.4px;color:#555">Kauf</div>
<div class="a" style="left:1728px;top:268px;font-size:19px;color:#666">Sprache:</div>
<div class="bd" style="left:1814px;top:268px;font-size:19px">d</div>
<div class="a" style="left:1728px;top:302px;font-size:19px;color:#666">Quelle:</div>
<div class="bd" style="left:1799px;top:302px;font-size:19px">BREVO</div>
<div class="a" style="left:1728px;top:336px;font-size:19px;color:#666">Merkmale:</div>
<div class="bd" style="left:1828px;top:336px;font-size:19px">Newsblatt abmelden</div>
<div class="a" style="left:1702px;top:282px;width:594px;height:63px;border:6px solid #ee8f1f"></div>
<div class="it" style="left:1120px;top:593.5px;font-size:19px">erste:</div>
<div class="it" style="left:1324px;top:593.5px;font-size:19px">Wert:</div>
<div class="bd" style="left:1454px;top:593.5px;font-size:19px">0.00</div>
<div class="it" style="left:1120px;top:619.0px;font-size:19px">letzte:</div>
<div class="it" style="left:1324px;top:619.0px;font-size:19px">Wert:</div>
<div class="bd" style="left:1454px;top:619.0px;font-size:19px">0.00</div>
<div class="it" style="left:1120px;top:644.5px;font-size:19px">höchste:</div>
<div class="it" style="left:1324px;top:644.5px;font-size:19px">Wert:</div>
<div class="bd" style="left:1454px;top:644.5px;font-size:19px">0.00</div>
<div class="it" style="left:1120px;top:670px;font-size:19px">Lifetime Anzahl:</div>
<div class="bd" style="left:1312px;top:670px;font-size:19px">0</div>
<div class="it" style="left:1333px;top:670px;font-size:19px">Value:</div>
<div class="bd" style="left:1470px;top:670px;font-size:19px">0.00</div>
<div class="it" style="left:1719px;top:593.5px;font-size:19px">offene Forderung:</div>
<div class="bd" style="left:1918px;top:593.5px;font-size:19px">0.00</div>
<div class="it" style="left:1965px;top:593.5px;font-size:19px">Guthaben:</div>
<div class="bd" style="left:2101px;top:593.5px;font-size:19px">0.00</div>
<div class="it" style="left:1719px;top:619.0px;font-size:19px">erster Kauf:</div>
<div class="it" style="left:1953px;top:619.0px;font-size:19px">Wert:</div>
<div class="bd" style="left:2072px;top:619.0px;font-size:19px">0.00</div>
<div class="it" style="left:1719px;top:644.5px;font-size:19px">letzter Kauf:</div>
<div class="it" style="left:1953px;top:644.5px;font-size:19px">Wert:</div>
<div class="bd" style="left:2072px;top:644.5px;font-size:19px">0.00</div>
<div class="it" style="left:1719px;top:670px;font-size:19px">Lifetime Anzahl:</div>
<div class="bd" style="left:1911px;top:670px;font-size:19px">0</div>
<div class="it" style="left:1931px;top:670px;font-size:19px">Value:</div>
<div class="bd" style="left:2069px;top:670px;font-size:19px">0.00</div>
<div class="a" style="left:1321px;top:723px;width:2px;height:2px;background:#999"></div>
<div class="a" style="left:1326px;top:723px;width:2px;height:2px;background:#999"></div>
<div class="a" style="left:1331px;top:723px;width:2px;height:2px;background:#999"></div>
<div class="a" style="left:351px;top:728px;width:1947px;height:567px;border-left:2px solid #d6d6d6;border-top:2px solid #dadada;background:#fff"></div>
<div class="a" style="left:354px;top:767.5px;width:1948px;height:4.5px;background:#d6d6d6"></div>
<div class="a" style="left:1011px;top:731px;width:144px;height:36px;background:#dadada"></div>
<div class="a" style="left:464px;top:731px;width:2px;height:36px;background:#e3e3e3"></div>
<div class="a" style="left:569px;top:731px;width:2px;height:36px;background:#e3e3e3"></div>
<div class="a" style="left:680px;top:731px;width:2px;height:36px;background:#e3e3e3"></div>
<div class="a" style="left:821px;top:731px;width:2px;height:36px;background:#e3e3e3"></div>
<div class="a" style="left:909px;top:731px;width:2px;height:36px;background:#e3e3e3"></div>
<div class="a" style="left:1009px;top:731px;width:2px;height:36px;background:#e3e3e3"></div>
<div class="a" style="left:1154px;top:731px;width:2px;height:36px;background:#e3e3e3"></div>
<div class="a" style="left:1314px;top:731px;width:2px;height:36px;background:#e3e3e3"></div>
<div class="a" style="left:1414px;top:731px;width:2px;height:36px;background:#e3e3e3"></div>
<div class="a" style="left:1589px;top:731px;width:2px;height:36px;background:#e3e3e3"></div>
<div class="a" style="left:1688px;top:731px;width:2px;height:36px;background:#e3e3e3"></div>
<div class="tab" style="left:359px;top:738px">Ereignisse</div>
<div class="tab" style="left:474px;top:738px">Adressen</div>
<div class="tab" style="left:580px;top:738px">Merkmale</div>
<div class="tab" style="left:690px;top:738px">Beziehungen</div>
<div class="tab" style="left:831px;top:738px">Umsatz</div>
<div class="tab" style="left:919px;top:738px">Zusagen</div>
<div class="tab" style="left:1019px;top:738px">Publikationen</div>
<div class="tab" style="left:1163px;top:738px">Korrespondenz</div>
<div class="tab" style="left:1323px;top:738px">Aktionen</div>
<div class="tab" style="left:1423px;top:738px">Veranstaltungen</div>
<div class="tab" style="left:1598px;top:738px">Sonstige</div>
<div class="a" style="left:344px;top:731px;width:6px;height:2px;background:#ccc"></div>
<div class="a" style="left:344px;top:738px;width:6px;height:2px;background:#ccc"></div>
<svg class="a" style="left:2183px;top:736px" width="24" height="23" viewBox="0 0 24 23"><rect x="1.5" y="1.5" width="17" height="17" rx="1.5" fill="#dfe6f0" stroke="#c2cad6" stroke-width="1.5"/><rect x="4.5" y="4.5" width="17" height="17" rx="1.5" fill="#f4f8fd" stroke="#a9b2c0" stroke-width="2"/><path d="M7.5 13h11" stroke="#6d7ea2" stroke-width="2.2"/></svg>
<svg class="a" style="left:2228px;top:736px" width="24" height="23" viewBox="0 0 24 23"><rect x="1.5" y="1.5" width="17" height="17" rx="1.5" fill="#dfe6f0" stroke="#c2cad6" stroke-width="1.5"/><rect x="4.5" y="4.5" width="17" height="17" rx="1.5" fill="#f4f8fd" stroke="#a9b2c0" stroke-width="2"/><path d="M7.5 13h11" stroke="#6d7ea2" stroke-width="2.2"/><path d="M13 7.5v11" stroke="#6d7ea2" stroke-width="2.2"/></svg>
<svg class="a" style="left:2276px;top:188px" width="18" height="10" viewBox="0 0 18 10"><path d="M1.5 1.5h15L9 8.5z" fill="#fff" stroke="#333" stroke-width="2.4" stroke-linejoin="round"/></svg>
<svg class="a" style="left:2276px;top:738px" width="18" height="10" viewBox="0 0 18 10"><path d="M1.5 1.5h15L9 8.5z" fill="#fff" stroke="#333" stroke-width="2.4" stroke-linejoin="round"/></svg>
<div class="a" style="left:355px;top:772px;font-size:19px;color:#555">Publikationen zu Person: 1’030’016</div>
<div class="a" style="left:354px;top:797px;width:1947.5px;height:40px;background:linear-gradient(#ffffff,#ebebeb)"></div>
<div class="a" style="left:354px;top:835px;width:1947.5px;height:2px;background:#cdcdcd"></div>
<div class="a" style="left:352px;top:837px;width:1949.5px;height:452px;background:#e9e9e9"></div>
<div class="a" style="left:351px;top:1289px;width:1952.7px;height:6px;background:linear-gradient(#e2e2e2,#c4c4c4)"></div>
<div class="a" style="left:690px;top:805px;width:1px;height:484px;background:#e4e4e4"></div>
<div class="a" style="left:829px;top:805px;width:1px;height:484px;background:#e4e4e4"></div>
<div class="a" style="left:950px;top:805px;width:1px;height:484px;background:#e4e4e4"></div>
<div class="a" style="left:1159px;top:805px;width:1px;height:484px;background:#e4e4e4"></div>
<div class="a" style="left:1269px;top:805px;width:1px;height:484px;background:#e4e4e4"></div>
<div class="a" style="left:1406px;top:805px;width:1px;height:484px;background:#e4e4e4"></div>
<div class="a" style="left:1546px;top:805px;width:1px;height:484px;background:#e4e4e4"></div>
<div class="a" style="left:1802px;top:805px;width:1px;height:484px;background:#e4e4e4"></div>
<div class="th" style="left:363px;top:806px">Publikation</div>
<div class="th" style="left:699px;top:806px">Kanal</div>
<div class="th" style="left:836px;top:806px">Verteiler</div>
<div class="th" style="left:960px;top:806px">explizit</div>
<div class="th" style="left:1278px;top:806px">gilt von</div>
<div class="th" style="left:1416px;top:806px">bis</div>
<div class="th" style="left:1553px;top:806px">Adresse</div>
<div class="th" style="left:1811px;top:806px">Beschreibung</div>
<div class="th" style="left:1160px;top:806px;width:101px;text-align:right">Anzahl</div>
<div class="a" style="left:668px;top:815px;width:0;height:0;border-bottom:6px solid #c8c8c8;border-left:6px solid transparent;border-right:6px solid transparent"></div>
<div class="td" style="left:386.0px;top:840.8px">Jahresbericht</div>
<div class="td" style="left:696px;top:840.8px">E-Mail</div>
<div class="td" style="left:833px;top:840.8px">ja</div>
<div class="td" style="left:1160px;top:840.8px;width:104px;text-align:right">1</div>
<div class="td" style="left:1808px;top:840.8px">Jahresbericht</div>
<div class="td" style="left:386.0px;top:871.1px">Magazine</div>
<div class="a" style="left:365px;top:879.1px;width:0;height:0;border-right:6px solid #bdbdbd;border-top:6px solid transparent"></div>
<div class="td" style="left:833px;top:871.1px">nein</div>
<div class="td" style="left:1808px;top:871.1px">Magazine</div>
<div class="td" style="left:411.5px;top:901.5px">Kids</div>
<div class="td" style="left:833px;top:901.5px">nein</div>
<div class="td" style="left:411.5px;top:931.8px">Magazin A</div>
<div class="td" style="left:833px;top:931.8px">nein</div>
<div class="td" style="left:1808px;top:931.8px">Magazin A</div>
<div class="td" style="left:411.5px;top:962.2px">Magazin B</div>
<div class="td" style="left:833px;top:962.2px">nein</div>
<div class="td" style="left:1808px;top:962.2px">Magazin B</div>
<div class="td" style="left:386.0px;top:992.5px">Mitglieder-Info</div>
<div class="td" style="left:833px;top:992.5px">nein</div>
<div class="td" style="left:1808px;top:992.5px">Mitglieder-Info</div>
<div class="td" style="left:386.0px;top:1022.9px">Newsletters</div>
<div class="a" style="left:365px;top:1030.9px;width:0;height:0;border-right:6px solid #bdbdbd;border-top:6px solid transparent"></div>
<div class="td" style="left:833px;top:1022.9px">ja</div>
<div class="a" style="left:354px;top:1049.5px;width:1947.5px;height:28.5px;background:#c8d0df"></div>
<div class="td" style="left:411.5px;top:1053.2px">Newsblatt</div>
<div class="td" style="left:696px;top:1053.2px">E-Mail</div>
<div class="td" style="left:833px;top:1053.2px">ja</div>
<div class="td" style="left:956px;top:1053.2px">hinzugefügt</div>
<div class="td" style="left:1160px;top:1053.2px;width:104px;text-align:right">1</div>
<div class="td" style="left:1551px;top:1053.2px">christian.giorgietta@arena…</div>
<div class="td" style="left:1808px;top:1053.2px">Newsblatt</div>
<div class="a" style="left:349px;top:1014px;width:1951px;height:89px;border:6px solid #ee8f1f"></div>
<div class="a" style="left:2134px;top:1305px;font-size:19px;color:#555">Standard / dac</div>
<svg class="a" style="left:2274px;top:1304px" width="24" height="24" viewBox="0 0 24 24"><circle cx="12" cy="12" r="10" fill="none" stroke="#444" stroke-width="2.4"/><circle cx="12" cy="7.6" r="1.5" fill="#444"/><path d="M12 10.8v6" stroke="#444" stroke-width="2.6" stroke-linecap="round"/></svg>
<svg class="a" style="left:0;top:1319px" width="18" height="18" viewBox="0 0 18 18"><path d="M0 0A18 18 0 0 0 18 18H0z" fill="#34465e"/></svg>
<svg class="a" style="left:2287px;top:1319px" width="18" height="18" viewBox="0 0 18 18"><path d="M18 0A18 18 0 0 1 0 18H18z" fill="#b0642a"/></svg>
</body></html>
